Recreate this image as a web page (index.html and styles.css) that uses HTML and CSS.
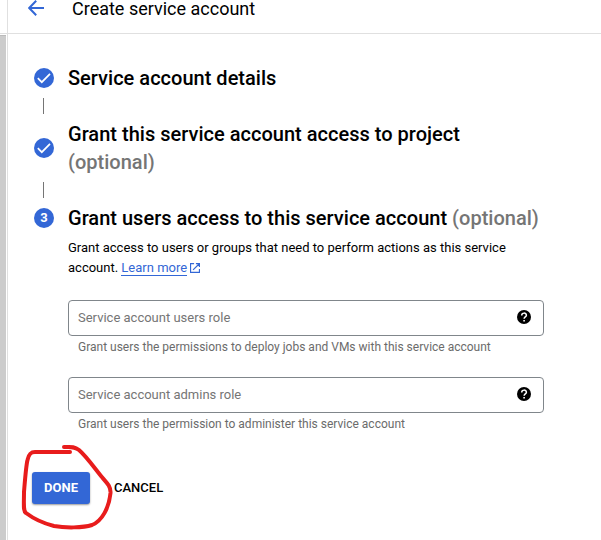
FILE: index.html
```html
<!DOCTYPE html>
<html lang="en">
<head>
<meta charset="utf-8">
<title>Create service account</title>
<link rel="stylesheet" href="styles.css">
</head>
<body>
<div class="app">
  <div class="rail"><div class="rail-top"></div><div class="rail-body"></div></div>
  <main class="main">
    <header class="header">
      <svg class="back" width="16" height="16" viewBox="0 0 16 16"><path d="M16 8H1.5M8.2 .8L1.2 8l7 7.2" fill="none" stroke="#3367d6" stroke-width="2"/></svg>
      <h1 class="page-title">Create service account</h1>
    </header>
    <div class="content">
      <section class="step">
        <svg class="badge" viewBox="0 0 20 20"><circle cx="10" cy="10" r="10" fill="#3367d6"/><path d="M3.8 10.2l4 4 8.2-8.4" fill="none" stroke="#fff" stroke-width="1.7"/></svg>
        <h2 class="step-title">Service account details</h2>
      </section>
      <div class="connector"></div>
      <section class="step">
        <svg class="badge" viewBox="0 0 20 20"><circle cx="10" cy="10" r="10" fill="#3367d6"/><path d="M3.8 10.2l4 4 8.2-8.4" fill="none" stroke="#fff" stroke-width="1.7"/></svg>
        <h2 class="step-title">Grant this service account access to project<br><span class="optional">(optional)</span></h2>
      </section>
      <div class="connector"></div>
      <section class="step">
        <span class="badge number">3</span>
        <h2 class="step-title">Grant users access to this service account <span class="optional">(optional)</span></h2>
      </section>
      <div class="step-body">
        <p class="description">Grant access to users or groups that need to perform actions as this service<br>account. <a class="link">Learn more</a><svg class="external" width="10" height="10" viewBox="0 0 11 11"><path d="M4.5 .6H.6v9.8h9.8V6.5M6.5 .6h3.9v3.9M10.2 .8L3.4 7.6" fill="none" stroke="#3367d6" stroke-width="1.3"/></svg></p>
        <div class="field">
          <div class="input"><span>Service account users role</span><svg class="help" viewBox="0 0 14 14"><circle cx="7" cy="7" r="7"/><path d="M4.7 5.4C4.7 2.4 9.4 2.4 9.4 5.2C9.4 7 7.1 6.9 7.1 8.8" fill="none" stroke="#fff" stroke-width="1.5"/><path d="M6.3 10h1.6v1.6H6.3z" fill="#fff"/></svg></div>
          <p class="hint">Grant users the permissions to deploy jobs and VMs with this service account</p>
        </div>
        <div class="field">
          <div class="input"><span>Service account admins role</span><svg class="help" viewBox="0 0 14 14"><circle cx="7" cy="7" r="7"/><path d="M4.7 5.4C4.7 2.4 9.4 2.4 9.4 5.2C9.4 7 7.1 6.9 7.1 8.8" fill="none" stroke="#fff" stroke-width="1.5"/><path d="M6.3 10h1.6v1.6H6.3z" fill="#fff"/></svg></div>
          <p class="hint">Grant users the permission to administer this service account</p>
        </div>
      </div>
      <div class="actions">
        <button class="done">DONE</button>
        <button class="cancel">CANCEL</button>
        <svg class="marker" width="96" height="90" viewBox="20 442 96 90"><path d="M64 447C70 447 74 446 79 450C86 456 93 466 101 476C106 482 111 486 110.500 493C109 508 102 521 92 525C83 528 65 528 54 526C42 523 34 519 26 513C23 511 24 505 24 492C25 480 26 466 27.500 460C28.500 455 30 452 35 452H70" fill="none" stroke="#e81c1c" stroke-width="4" stroke-linecap="round" stroke-linejoin="round"/></svg>
      </div>
    </div>
  </main>
</div>
</body>
</html>
```
FILE: styles.css
```css
* { box-sizing: border-box; }
body { margin: 0; background: #fff; color: #000; font-family: Roboto, sans-serif; overflow: hidden; }
h1, h2, p { margin: 0; }
svg { display: block; flex: none; }
.app { display: flex; height: 540px; }
.rail { width: 7px; flex: none; }
.rail-top { height: 34px; border-bottom: 1px solid #e0e0e0; }
.rail-body { width: 6px; height: 505px; margin-top: 1px; background: #ccc; border-top: 1px solid #bbb; }
.main { flex: 1; min-width: 0; border-left: 1px solid #e0e0e0; }
.header { height: 34px; border-bottom: 1px solid #e0e0e0; display: flex; align-items: flex-start; padding-left: 20px; }
.page-title { margin-left: 28px; font-size: 18px; font-weight: 400; line-height: 18px; white-space: nowrap; }
.content { padding: 30px 0 0 24px; }
.step { display: flex; align-items: center; gap: 14px; padding-left: 2px; }
.badge { width: 20px; height: 20px; flex: none; }
.number { border-radius: 50%; background: #3367d6; color: #fff; font-size: 13px; font-weight: 700; line-height: 20px; text-align: center; }
.step-title { font-size: 20px; font-weight: 500; line-height: 28px; letter-spacing: .015px; white-space: nowrap; }
.optional { color: #757575; }
.connector { width: 1px; height: 16px; margin: 6px 0 6px 11px; background: #757575; }
.step-body { width: 476px; margin: 6px 0 0 36px; }
.description { height: 62px; font-size: 13px; line-height: 20px; white-space: nowrap; }
.link { color: #3367d6; border-bottom: 1px solid #3367d6; }
.external { display: inline-block; margin-left: 3px; vertical-align: -1px; }
.field { height: 77px; }
.input { height: 36px; padding: 0 12px 2px 9px; border: 1px solid #80868b; border-radius: 4px; display: flex; align-items: center; justify-content: space-between; color: #757575; font-size: 13px; }
.help { width: 14px; height: 14px; }
.hint { padding-left: 10px; margin-top: 3px; color: #6b6b6b; font-size: 12px; line-height: 16px; white-space: nowrap; }
.actions { position: relative; display: flex; gap: 24px; margin-top: 18px; }
button { height: 32px; padding: 0 0 2px; border: 0; background: none; font: 500 13px Roboto, sans-serif; color: #000; }
.actions .done { width: 58px; border-radius: 3px; background: #3367d6; color: #fff; font-weight: 700; box-shadow: 0 1px 2px rgba(0, 0, 0, .4); }
.marker { position: absolute; left: -12px; top: -30px; }
```
